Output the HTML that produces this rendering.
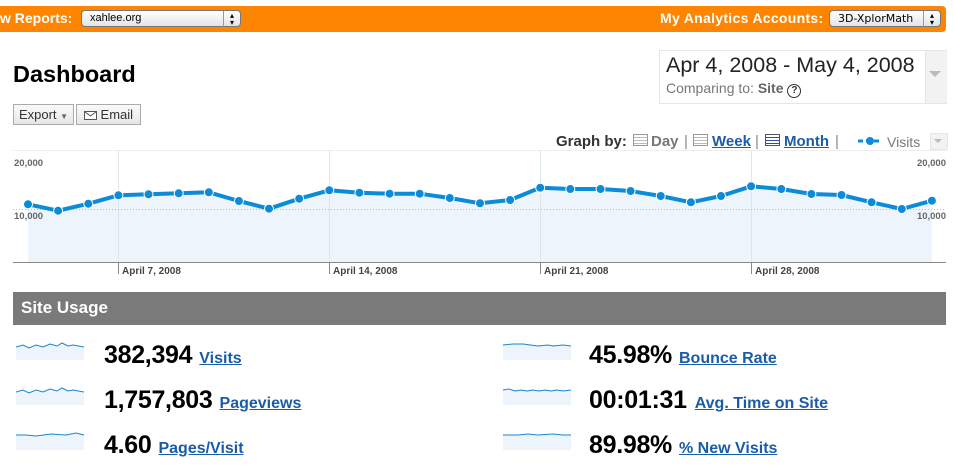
<!DOCTYPE html>
<html><head><meta charset="utf-8"><style>
body{margin:0;width:953px;height:469px;background:#fff;font-family:"Liberation Sans",Arial,sans-serif;position:relative;overflow:hidden}
.a{position:absolute;white-space:nowrap}
.sel{position:absolute;background:linear-gradient(#fff,#e4e4e4);border:1px solid #777;border-radius:4px;font-size:11px;color:#000;height:15px;line-height:15px;padding-left:8px;box-sizing:content-box}
.sel .ar{position:absolute;right:0;top:0;width:16px;height:15px;border-left:1px solid #999;text-align:center;font-size:8px;line-height:7px;padding-top:1px}
.btn{position:absolute;border:1px solid #aaa;background:linear-gradient(#fafafa,#e6e6e6);font-size:13px;color:#333;height:19px;line-height:19px;text-align:center}
.num{position:absolute;font-size:25px;font-weight:bold;color:#000;letter-spacing:-0.3px}
.lk{color:#1a5ca8;font-size:16px;font-weight:bold;text-decoration:underline;letter-spacing:0;margin-left:7px}
.sp{position:absolute;width:68px;height:18px}
.gb{position:absolute;top:133px;font-size:15px;font-weight:bold;white-space:nowrap}
.ic{position:absolute;top:134px;width:13px;height:10px;border:1px solid #999;background:repeating-linear-gradient(#fff 0 2px,#bbb 2px 3px)}
</style></head><body>
<div class="a" style="left:0;top:6px;width:946px;height:26px;background:#fd8502;border-radius:0 4px 4px 0"></div>
<div class="a" style="left:0;top:10px;font-size:14px;font-weight:bold;color:#fff">w Reports:</div>
<div class="sel" style="left:81px;top:10px;width:150px">xahlee.org<div class="ar">▴<br>▾</div></div>
<div class="a" style="left:660px;top:10px;font-size:14px;font-weight:bold;color:#fff;letter-spacing:0.3px">My Analytics Accounts:</div>
<div class="sel" style="left:829px;top:10px;width:102px;font-family:'DejaVu Sans',sans-serif;font-size:11px">3D-XplorMath<div class="ar">▴<br>▾</div></div>

<div class="a" style="left:13px;top:61px;font-size:23.5px;font-weight:bold;color:#000">Dashboard</div>
<div class="btn" style="left:13px;top:104px;width:59px">Export <span style="font-size:8px;color:#666">▼</span></div>
<div class="btn" style="left:76px;top:104px;width:63px"><svg width="13" height="9" style="vertical-align:-1px"><rect x="0.5" y="0.5" width="12" height="8" fill="#fff" stroke="#555"/><path d="M0.5 0.5 L6.5 5 L12.5 0.5" fill="none" stroke="#555"/></svg> Email</div>

<div class="a" style="left:659px;top:50px;width:286px;height:52px;border:1px solid #e6e6e6;background:#fff"></div>
<div class="a" style="left:925px;top:51px;width:21px;height:52px;background:#f2f2f2;border-left:1px solid #e6e6e6"></div>
<div class="a" style="left:929px;top:71px;width:0;height:0;border-left:6px solid transparent;border-right:6px solid transparent;border-top:6px solid #bbb"></div>
<div class="a" style="left:666px;top:53px;font-size:21.5px;color:#222">Apr 4, 2008 - May 4, 2008</div>
<div class="a" style="left:666px;top:80px;font-size:14px;color:#777">Comparing to: <b style="color:#666">Site</b> <span style="display:inline-block;width:12px;height:12px;border:1px solid #333;border-radius:50%;font-size:10px;line-height:12px;text-align:center;color:#333;font-weight:bold">?</span></div>

<div class="gb" style="left:556px;color:#333">Graph by:</div>
<div class="ic" style="left:633px"></div>
<div class="gb" style="left:651px;color:#777">Day</div>
<div class="gb" style="left:684px;color:#888;font-weight:normal">|</div>
<div class="ic" style="left:693px"></div>
<div class="gb" style="left:712px;color:#1a5ca8;text-decoration:underline">Week</div>
<div class="gb" style="left:755px;color:#888;font-weight:normal">|</div>
<div class="ic" style="left:765px;border-color:#555;background:repeating-linear-gradient(#fff 0 2px,#2255aa 2px 3px)"></div>
<div class="gb" style="left:784px;color:#1a5ca8;text-decoration:underline">Month</div>
<div class="gb" style="left:835px;color:#888;font-weight:normal">|</div>
<svg class="a" style="left:858px;top:136px" width="24" height="10"><line x1="0" y1="5" x2="24" y2="5" stroke="#0b8bd8" stroke-width="3" stroke-dasharray="5 3"/><circle cx="12" cy="5" r="4" fill="#0b8bd8"/></svg>
<div class="a" style="left:887px;top:134px;font-size:14px;color:#777">Visits</div>
<div class="a" style="left:930px;top:133px;width:16px;height:15px;background:#f2f2f2;border:1px solid #e6e6e6"></div>
<div class="a" style="left:934px;top:139px;width:0;height:0;border-left:4px solid transparent;border-right:4px solid transparent;border-top:4px solid #bbb"></div>

<svg class="a" style="left:0;top:0" width="953" height="290">
<line x1="13" y1="150.5" x2="946" y2="150.5" stroke="#eee"/>
<polygon fill="#edf4fb" points="28,204.3 58.1,210.7 88.3,203.7 118.4,195.3 148.5,194.3 178.7,193.3 208.8,192.3 238.9,201 269,208.7 299.2,198.7 329.3,190.3 359.4,192.7 389.6,193.7 419.7,193.7 449.8,198 480,203.3 510.1,200 540.2,187.7 570.3,189 600.5,189 630.6,191 660.7,196 690.9,202.3 721,196 751.1,186.3 781.3,189 811.4,194 841.5,195 871.6,202.3 901.8,209 931.9,200.7 931.9,262 28,262"/>
<g stroke="#dde6ea"><line x1="118.5" y1="151" x2="118.5" y2="262"/><line x1="329.5" y1="151" x2="329.5" y2="262"/><line x1="540.5" y1="151" x2="540.5" y2="262"/><line x1="751.5" y1="151" x2="751.5" y2="262"/></g>
<line x1="13" y1="209.5" x2="946" y2="209.5" stroke="#bbb" stroke-dasharray="1 2"/>
<line x1="13" y1="262.5" x2="946" y2="262.5" stroke="#888"/>
<g stroke="#888"><line x1="118.5" y1="262" x2="118.5" y2="274"/><line x1="329.5" y1="262" x2="329.5" y2="274"/><line x1="540.5" y1="262" x2="540.5" y2="274"/><line x1="751.5" y1="262" x2="751.5" y2="274"/></g>
<polyline fill="none" stroke="#0b8bd8" stroke-width="4" stroke-linejoin="round" points="28,204.3 58.1,210.7 88.3,203.7 118.4,195.3 148.5,194.3 178.7,193.3 208.8,192.3 238.9,201 269,208.7 299.2,198.7 329.3,190.3 359.4,192.7 389.6,193.7 419.7,193.7 449.8,198 480,203.3 510.1,200 540.2,187.7 570.3,189 600.5,189 630.6,191 660.7,196 690.9,202.3 721,196 751.1,186.3 781.3,189 811.4,194 841.5,195 871.6,202.3 901.8,209 931.9,200.7"/>
<g fill="#0b8bd8" stroke="#fff" stroke-width="1"><circle cx="28" cy="204.3" r="4.5"/><circle cx="58.1" cy="210.7" r="4.5"/><circle cx="88.3" cy="203.7" r="4.5"/><circle cx="118.4" cy="195.3" r="4.5"/><circle cx="148.5" cy="194.3" r="4.5"/><circle cx="178.7" cy="193.3" r="4.5"/><circle cx="208.8" cy="192.3" r="4.5"/><circle cx="238.9" cy="201" r="4.5"/><circle cx="269" cy="208.7" r="4.5"/><circle cx="299.2" cy="198.7" r="4.5"/><circle cx="329.3" cy="190.3" r="4.5"/><circle cx="359.4" cy="192.7" r="4.5"/><circle cx="389.6" cy="193.7" r="4.5"/><circle cx="419.7" cy="193.7" r="4.5"/><circle cx="449.8" cy="198" r="4.5"/><circle cx="480" cy="203.3" r="4.5"/><circle cx="510.1" cy="200" r="4.5"/><circle cx="540.2" cy="187.7" r="4.5"/><circle cx="570.3" cy="189" r="4.5"/><circle cx="600.5" cy="189" r="4.5"/><circle cx="630.6" cy="191" r="4.5"/><circle cx="660.7" cy="196" r="4.5"/><circle cx="690.9" cy="202.3" r="4.5"/><circle cx="721" cy="196" r="4.5"/><circle cx="751.1" cy="186.3" r="4.5"/><circle cx="781.3" cy="189" r="4.5"/><circle cx="811.4" cy="194" r="4.5"/><circle cx="841.5" cy="195" r="4.5"/><circle cx="871.6" cy="202.3" r="4.5"/><circle cx="901.8" cy="209" r="4.5"/><circle cx="931.9" cy="200.7" r="4.5"/></g>
<g font-family="Liberation Sans,Arial,sans-serif" font-size="9.5" font-weight="bold" fill="#666"><text x="14" y="166">20,000</text><text x="14" y="219">10,000</text><text x="946" y="166" text-anchor="end">20,000</text><text x="946" y="219" text-anchor="end">10,000</text></g>
<g font-family="Liberation Sans,Arial,sans-serif" font-size="10" font-weight="bold" fill="#444"><text x="122" y="274">April 7, 2008</text><text x="333" y="274">April 14, 2008</text><text x="544" y="274">April 21, 2008</text><text x="755" y="274">April 28, 2008</text></g>
</svg>

<div class="a" style="left:13px;top:292px;width:933px;height:33px;background:#7a7a7a"></div>
<div class="a" style="left:21px;top:298px;font-size:17px;font-weight:bold;color:#fff">Site Usage</div>

<svg class="sp" style="left:16px;top:342px"><polygon fill="#edf4fb" points="0,5 7,3 13,6 20,3 27,5 34,2 41,4 46,1 52,4 57,3 68,5 68,18 0,18"/><polyline fill="none" stroke="#1a85d0" points="0,5 7,3 13,6 20,3 27,5 34,2 41,4 46,1 52,4 57,3 68,5"/></svg>
<svg class="sp" style="left:16px;top:387px"><polygon fill="#edf4fb" points="0,5 7,3 13,6 20,3 27,5 34,2 41,4 46,1 52,4 57,3 68,5 68,18 0,18"/><polyline fill="none" stroke="#1a85d0" points="0,5 7,3 13,6 20,3 27,5 34,2 41,4 46,1 52,4 57,3 68,5"/></svg>
<svg class="sp" style="left:16px;top:432px"><polygon fill="#edf4fb" points="0,3 20,4 35,2 50,3 60,1 68,3 68,18 0,18"/><polyline fill="none" stroke="#1a85d0" points="0,3 10,3 20,4 35,2 50,3 60,1 68,3"/></svg>
<svg class="sp" style="left:503px;top:342px"><polygon fill="#edf4fb" points="0,3 20,2 35,4 50,3 68,4 68,18 0,18"/><polyline fill="none" stroke="#1a85d0" points="0,3 10,2 20,2 35,4 45,3 50,4 60,3 68,4"/></svg>
<svg class="sp" style="left:503px;top:387px"><polygon fill="#edf4fb" points="0,3 68,3 68,18 0,18"/><polyline fill="none" stroke="#1a85d0" points="0,3 6,2 12,4 18,3 24,4 30,3 36,4 42,3 48,4 54,3 60,4 68,3"/></svg>
<svg class="sp" style="left:503px;top:432px"><polygon fill="#edf4fb" points="0,3 68,3 68,18 0,18"/><polyline fill="none" stroke="#1a85d0" points="0,3 15,3 25,2 35,3 50,2 60,3 68,3"/></svg>

<div class="num" style="left:104px;top:341px">382,394<a class="lk">Visits</a></div>
<div class="num" style="left:104px;top:386px">1,757,803<a class="lk">Pageviews</a></div>
<div class="num" style="left:104px;top:431px">4.60<a class="lk">Pages/Visit</a></div>
<div class="num" style="left:589px;top:341px">45.98%<a class="lk">Bounce Rate</a></div>
<div class="num" style="left:589px;top:386px">00:01:31<a class="lk" style="margin-left:8px">Avg. Time on Site</a></div>
<div class="num" style="left:589px;top:431px">89.98%<a class="lk">% New Visits</a></div>
</body></html>
